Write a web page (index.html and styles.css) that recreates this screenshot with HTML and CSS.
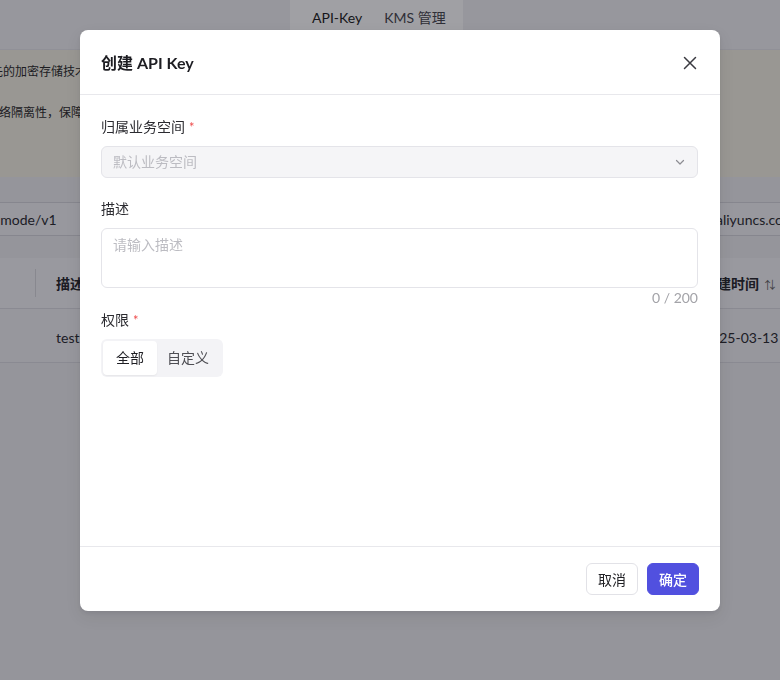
FILE: index.html
```html
<!DOCTYPE html>
<html lang="zh-CN">
<head>
<meta charset="utf-8">
<title>创建 API Key</title>
<link rel="stylesheet" href="styles.css">
</head>
<body>
<div class="page">
  <div class="topbar">
    <div class="tabs">
      <span class="tab tab-active">API-Key</span>
      <span class="tab">KMS 管理</span>
    </div>
  </div>
  <div class="banner">
    <p class="banner-line line-one">领先的加密存储技术，确保您的 API-Key 数据安全，仅在创建时可见完整内容。</p>
    <p class="banner-line line-two">网络隔离性，保障各业务空间之间的数据与调用互不影响。</p>
  </div>
  <div class="endpoint">
    <span class="endpoint-left">-mode/v1</span>
    <span class="endpoint-right">aliyuncs.com</span>
  </div>
  <div class="table">
    <div class="thead">
      <span class="th th-check"><i class="divider"></i></span>
      <span class="th th-desc">描述</span>
      <span class="th th-time">创建时间 <span class="sort">⇅</span></span>
    </div>
    <div class="trow">
      <span class="td td-check"></span>
      <span class="td td-desc">test</span>
      <span class="td td-time">2025-03-13 14:22:09</span>
    </div>
  </div>
</div>

<div class="mask"></div>

<div class="modal">
  <div class="modal-header">
    <h2 class="modal-title">创建 API Key</h2>
    <svg class="close" width="16" height="16" viewBox="0 0 16 16" aria-hidden="true">
      <path d="M2.5 2.5 L13.5 13.5 M13.5 2.5 L2.5 13.5" stroke="#3a3a40" stroke-width="1.5" stroke-linecap="round" fill="none"/>
    </svg>
  </div>
  <div class="modal-body">
    <div class="form-item">
      <div class="label">归属业务空间<span class="req">*</span></div>
      <div class="select">
        <span class="placeholder">默认业务空间</span>
        <svg class="chevron" width="12" height="12" viewBox="0 0 12 12" aria-hidden="true">
          <path d="M2.5 4.5 L6 8 L9.5 4.5" stroke="#8d8d93" stroke-width="1.2" fill="none" stroke-linecap="round" stroke-linejoin="round"/>
        </svg>
      </div>
    </div>
    <div class="form-item form-item-count">
      <div class="label">描述</div>
      <div class="textarea"><span class="placeholder">请输入描述</span></div>
      <div class="count">0 / 200</div>
    </div>
    <div class="form-item">
      <div class="label">权限<span class="req">*</span></div>
      <div class="segmented">
        <span class="seg seg-active">全部</span>
        <span class="seg">自定义</span>
      </div>
    </div>
  </div>
  <div class="modal-footer">
    <button class="btn btn-default">取消</button>
    <button class="btn btn-primary">确定</button>
  </div>
</div>
</body>
</html>
```

FILE: styles.css
```css
* {
  box-sizing: border-box;
}

html, body {
  margin: 0;
  padding: 0;
  width: 780px;
  height: 680px;
  overflow: hidden;
}

body {
  font-family: "Lato", "Noto Sans CJK SC", sans-serif;
  font-size: 14px;
  color: #2b2b30;
  background: #eeeef1;
}

.page {
  width: 780px;
  height: 680px;
  background: #eeeef1;
  overflow: hidden;
}

/* top bar with tabs */
.topbar {
  height: 50px;
  background: #f1f1f4;
  border-bottom: 1px solid #e6e6ea;
  padding-left: 290px;
}

.tabs {
  display: flex;
  width: 173px;
  height: 34px;
  background: #ffffff;
  align-items: center;
  padding-left: 22px;
  gap: 22px;
}

.tab {
  font-size: 14px;
  color: #4a4a50;
}

.tab-active {
  color: #1f1f24;
}

/* banner */
.banner {
  height: 127px;
  background: #f4f1e4;
  padding-top: 12px;
  overflow: hidden;
}

.banner-line {
  margin: 0;
  font-size: 12px;
  line-height: 20px;
  color: #2e2e2e;
  white-space: nowrap;
}

.line-one {
  text-indent: -21px;
}

.line-two {
  margin-top: 21px;
  text-indent: -13px;
}

/* endpoint row */
.endpoint {
  display: flex;
  margin-top: 25px;
  height: 34px;
  align-items: center;
  background: #f2f2f5;
  border-top: 1px solid #d6d6dc;
  border-bottom: 1px solid #d6d6dc;
  white-space: nowrap;
  overflow: hidden;
}

.endpoint-left {
  width: 716px;
  flex: none;
  font-size: 14px;
  color: #2e2e33;
  text-indent: -5px;
}

.endpoint-right {
  font-size: 14px;
  color: #2e2e33;
}

/* table */
.table {
  margin-top: 22px;
  background: #f4f4f7;
}

.thead, .trow {
  display: flex;
  align-items: center;
  white-space: nowrap;
  border-bottom: 1px solid #dcdce2;
}

.thead {
  height: 51px;
}

.trow {
  height: 54px;
  background: #f1f1f4;
  padding-top: 3px;
}

.th {
  font-weight: 700;
  color: #2b2b30;
}

.th-check, .td-check {
  width: 56px;
  flex: none;
  display: flex;
  align-items: center;
}

.divider {
  display: block;
  width: 1px;
  height: 28px;
  margin-left: 35px;
  background: #d8d8de;
}

.th-desc, .td-desc {
  width: 647px;
  flex: none;
}

.td {
  color: #2e2e33;
}

.sort {
  font-weight: 400;
  font-size: 11px;
  color: #666;
  margin-left: 2px;
}

/* mask */
.mask {
  position: fixed;
  inset: 0;
  background: rgba(6, 4, 15, 0.38);
}

/* modal */
.modal {
  position: fixed;
  left: 80px;
  top: 30px;
  width: 640px;
  height: 581px;
  background: #ffffff;
  border-radius: 8px;
  box-shadow: 0 6px 16px rgba(0, 0, 0, 0.08), 0 2px 4px rgba(0, 0, 0, 0.06);
  display: flex;
  flex-direction: column;
}

.modal-header {
  height: 65px;
  flex: none;
  display: flex;
  align-items: center;
  justify-content: space-between;
  padding: 0 22px 0 21px;
  border-bottom: 1px solid #e8e8ec;
}

.modal-title {
  margin: 0;
  font-size: 16px;
  font-weight: 700;
  color: #1d1d22;
}

.close {
  display: block;
  margin-top: 1px;
}

.modal-body {
  flex: 1;
  padding: 21px 22px 0 21px;
}

.form-item {
  margin-bottom: 20px;
}

.form-item-count {
  margin-bottom: 1px;
}

.label {
  font-size: 14px;
  line-height: 22px;
  color: #2b2b30;
  margin-bottom: 8px;
}

.req {
  color: #ee4d4d;
  margin-left: 4px;
  font-size: 13px;
}

.select {
  height: 32px;
  border: 1px solid #e4e4e9;
  border-radius: 6px;
  background: #f5f5f7;
  display: flex;
  align-items: center;
  justify-content: space-between;
  padding: 0 11px;
}

.placeholder {
  color: #bcbcc2;
  font-size: 14px;
  line-height: 22px;
}

.chevron {
  display: block;
}

.textarea {
  height: 60px;
  border: 1px solid #e4e4e9;
  border-radius: 6px;
  background: #ffffff;
  padding: 5px 11px;
}

.count {
  text-align: right;
  font-size: 14px;
  line-height: 20px;
  color: #a3a3a8;
}

.segmented {
  display: inline-flex;
  padding: 2px;
  background: #f3f3f6;
  border-radius: 6px;
}

.seg {
  height: 34px;
  line-height: 34px;
  padding: 0 12px 0 10px;
  font-size: 14px;
  color: #4d4d53;
  border-radius: 4px;
}

.seg-active {
  background: #ffffff;
  color: #1f1f24;
  box-shadow: 0 1px 2px rgba(0, 0, 0, 0.06);
  padding: 0 13px;
}

.modal-footer {
  height: 65px;
  flex: none;
  border-top: 1px solid #e8e8ec;
  display: flex;
  align-items: center;
  justify-content: flex-end;
  gap: 9px;
  padding-right: 21px;
}

.btn {
  height: 32px;
  width: 52px;
  border-radius: 6px;
  font-family: "Lato", "Noto Sans CJK SC", sans-serif;
  font-size: 14px;
  padding: 0;
  cursor: pointer;
}

.btn-default {
  background: #ffffff;
  border: 1px solid #e2e2e7;
  color: #222226;
}

.btn-primary {
  background: #5150df;
  border: 1px solid #5150df;
  color: #ffffff;
  font-weight: 500;
}
```
